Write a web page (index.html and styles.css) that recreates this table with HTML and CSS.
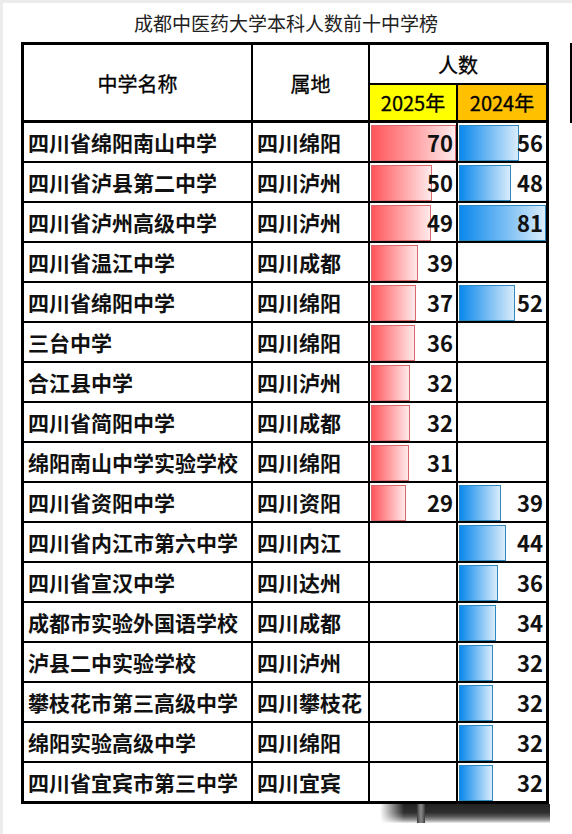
FILE: index.html
```html
<!DOCTYPE html>
<html lang="zh-CN">
<head>
<meta charset="utf-8">
<title>成都中医药大学本科人数前十中学榜</title>
<link rel="stylesheet" href="styles.css">
</head>
<body>
<div class="page">
  <h1 class="title">成都中医药大学本科人数前十中学榜</h1>
  <div class="stage">
    <div class="board-col">
      <div class="board">
        <div class="h h-name">中学名称</div>
        <div class="h h-loc">属地</div>
        <div class="h h-count">人数</div>
        <div class="h h-y25">2025年</div>
        <div class="h h-y24">2024年</div>

        <div class="c c-name">四川省绵阳南山中学</div><div class="c c-loc">四川绵阳</div>
        <div class="c c-val"><span class="bar red" style="width:85px"></span><span class="num">70</span></div>
        <div class="c c-val"><span class="bar blue" style="width:60.1px"></span><span class="num">56</span></div>

        <div class="c c-name">四川省泸县第二中学</div><div class="c c-loc">四川泸州</div>
        <div class="c c-val"><span class="bar red" style="width:60.7px"></span><span class="num">50</span></div>
        <div class="c c-val"><span class="bar blue" style="width:51.6px"></span><span class="num">48</span></div>

        <div class="c c-name">四川省泸州高级中学</div><div class="c c-loc">四川泸州</div>
        <div class="c c-val"><span class="bar red" style="width:59.5px"></span><span class="num">49</span></div>
        <div class="c c-val"><span class="bar blue" style="width:87px"></span><span class="num">81</span></div>

        <div class="c c-name">四川省温江中学</div><div class="c c-loc">四川成都</div>
        <div class="c c-val"><span class="bar red" style="width:47.4px"></span><span class="num">39</span></div>
        <div class="c c-val"></div>

        <div class="c c-name">四川省绵阳中学</div><div class="c c-loc">四川绵阳</div>
        <div class="c c-val"><span class="bar red" style="width:44.9px"></span><span class="num">37</span></div>
        <div class="c c-val"><span class="bar blue" style="width:55.9px"></span><span class="num">52</span></div>

        <div class="c c-name">三台中学</div><div class="c c-loc">四川绵阳</div>
        <div class="c c-val"><span class="bar red" style="width:43.7px"></span><span class="num">36</span></div>
        <div class="c c-val"></div>

        <div class="c c-name">合江县中学</div><div class="c c-loc">四川泸州</div>
        <div class="c c-val"><span class="bar red" style="width:38.9px"></span><span class="num">32</span></div>
        <div class="c c-val"></div>

        <div class="c c-name">四川省简阳中学</div><div class="c c-loc">四川成都</div>
        <div class="c c-val"><span class="bar red" style="width:38.9px"></span><span class="num">32</span></div>
        <div class="c c-val"></div>

        <div class="c c-name">绵阳南山中学实验学校</div><div class="c c-loc">四川绵阳</div>
        <div class="c c-val"><span class="bar red" style="width:37.6px"></span><span class="num">31</span></div>
        <div class="c c-val"></div>

        <div class="c c-name">四川省资阳中学</div><div class="c c-loc">四川资阳</div>
        <div class="c c-val"><span class="bar red" style="width:35.2px"></span><span class="num">29</span></div>
        <div class="c c-val"><span class="bar blue" style="width:41.9px"></span><span class="num">39</span></div>

        <div class="c c-name">四川省内江市第六中学</div><div class="c c-loc">四川内江</div>
        <div class="c c-val"></div>
        <div class="c c-val"><span class="bar blue" style="width:47.3px"></span><span class="num">44</span></div>

        <div class="c c-name">四川省宣汉中学</div><div class="c c-loc">四川达州</div>
        <div class="c c-val"></div>
        <div class="c c-val"><span class="bar blue" style="width:38.7px"></span><span class="num">36</span></div>

        <div class="c c-name">成都市实验外国语学校</div><div class="c c-loc">四川成都</div>
        <div class="c c-val"></div>
        <div class="c c-val"><span class="bar blue" style="width:36.5px"></span><span class="num">34</span></div>

        <div class="c c-name">泸县二中实验学校</div><div class="c c-loc">四川泸州</div>
        <div class="c c-val"></div>
        <div class="c c-val"><span class="bar blue" style="width:34.4px"></span><span class="num">32</span></div>

        <div class="c c-name">攀枝花市第三高级中学</div><div class="c c-loc">四川攀枝花</div>
        <div class="c c-val"></div>
        <div class="c c-val"><span class="bar blue" style="width:34.4px"></span><span class="num">32</span></div>

        <div class="c c-name">绵阳实验高级中学</div><div class="c c-loc">四川绵阳</div>
        <div class="c c-val"></div>
        <div class="c c-val"><span class="bar blue" style="width:34.4px"></span><span class="num">32</span></div>

        <div class="c c-name">四川省宜宾市第三中学</div><div class="c c-loc">四川宜宾</div>
        <div class="c c-val"></div>
        <div class="c c-val"><span class="bar blue" style="width:34.4px"></span><span class="num">32</span></div>
      </div>
      <div class="shadow"><span class="shadow-post"></span></div>
    </div>
    <div class="edge-line"></div>
  </div>
</div>
</body>
</html>
```

FILE: styles.css
```css
* { box-sizing: border-box; }

html, body {
  margin: 0;
  padding: 0;
  background: #fff;
}

.page {
  width: 572px;
  height: 834px;
  border-top: 3px solid #ececec;
  border-left: 3px solid #ececec;
  font-family: "Noto Sans CJK SC", "Noto Sans", sans-serif;
  color: #111;
  overflow: hidden;
}

.title {
  margin: 0;
  height: 39px;
  line-height: 39px;
  font-size: 19px;
  font-weight: 400;
  text-align: center;
  color: #222;
  padding-right: 3px;
}

.stage {
  display: flex;
  align-items: flex-start;
  gap: 20px;
  padding-left: 18px;
}

.board-col {
  display: flex;
  flex-direction: column;
}

.board {
  display: grid;
  grid-template-columns: 227px 115px 86px 88px;
  grid-template-rows: 38px 36px repeat(17, 38px);
  gap: 2px;
  background: #000;
  border: 3px solid #000;
  width: 528px;
}

.h {
  background: #fff;
  display: flex;
  align-items: center;
  justify-content: center;
  font-size: 20px;
  font-weight: 400;
  color: #000;
  -webkit-text-stroke: 0.3px #000;
}

.h-name { grid-row: 1 / 3; margin-bottom: 1px; padding-top: 2px; }
.h-loc { grid-row: 1 / 3; margin-bottom: 1px; padding-top: 2px; }
.h-count { grid-column: 3 / 5; padding-top: 1px; }
.h-y25 { background: #ffff00; margin-bottom: 1px; }
.h-y24 { background: #ffc000; margin-bottom: 1px; }

.c {
  background: #fff;
  font-size: 21px;
  font-weight: 700;
  color: #111;
}

.c-name, .c-loc {
  display: flex;
  align-items: center;
  white-space: nowrap;
}

.c-name { padding-left: 4px; }
.c-loc { padding-left: 4px; }

.c-val {
  display: grid;
  grid-template-columns: 1fr;
  grid-template-rows: 1fr;
}

.bar {
  grid-area: 1 / 1;
  justify-self: start;
  align-self: start;
  height: 36px;
  margin-top: 2px;
  margin-left: 1px;
  border: 1px solid;
}

.bar.red {
  background: linear-gradient(to right, #ff555a, #ffeaeb);
  border-color: #d9686c;
}

.bar.blue {
  background: linear-gradient(to right, #0a88ec, #d9ecfb);
  border-color: #2f88bd;
}

.num {
  grid-area: 1 / 1;
  justify-self: end;
  align-self: center;
  padding-right: 3px;
  font-size: 22px;
  font-weight: 700;
  line-height: 1;
  position: relative;
}

.shadow {
  display: flex;
  flex: none;
  margin-left: 359px;
  width: 170px;
  height: 19px;
  background-image:
    linear-gradient(to right, #fff, rgba(255, 255, 255, 0) 24px),
    linear-gradient(to bottom, #222 0, #2e2e2e 45%, #555 65%, #9a9a9a 85%, #eee 100%);
}

.shadow-post {
  margin-left: 37px;
  width: 8px;
  height: 19px;
  background: linear-gradient(to right, #3a3a3a, #808080 40%, #808080 60%, #3a3a3a);
}

.edge-line {
  width: 2px;
  height: 80px;
  margin-top: 1px;
  background: #000;
}
```
